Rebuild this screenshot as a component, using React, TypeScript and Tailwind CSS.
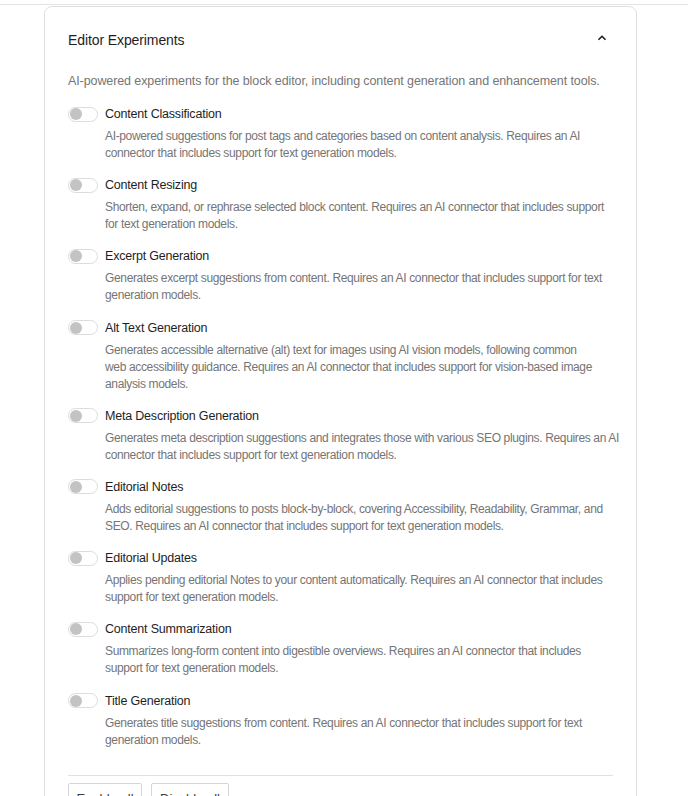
import React from 'react';

type Experiment = {
  label: string;
  lines: string[];
};

const experiments: Experiment[] = [
  {
    label: 'Content Classification',
    lines: [
      'AI-powered suggestions for post tags and categories based on content analysis. Requires an AI',
      'connector that includes support for text generation models.',
    ],
  },
  {
    label: 'Content Resizing',
    lines: [
      'Shorten, expand, or rephrase selected block content. Requires an AI connector that includes support',
      'for text generation models.',
    ],
  },
  {
    label: 'Excerpt Generation',
    lines: [
      'Generates excerpt suggestions from content. Requires an AI connector that includes support for text',
      'generation models.',
    ],
  },
  {
    label: 'Alt Text Generation',
    lines: [
      'Generates accessible alternative (alt) text for images using AI vision models, following common',
      'web accessibility guidance. Requires an AI connector that includes support for vision-based image',
      'analysis models.',
    ],
  },
  {
    label: 'Meta Description Generation',
    lines: [
      'Generates meta description suggestions and integrates those with various SEO plugins. Requires an AI',
      'connector that includes support for text generation models.',
    ],
  },
  {
    label: 'Editorial Notes',
    lines: [
      'Adds editorial suggestions to posts block-by-block, covering Accessibility, Readability, Grammar, and',
      'SEO. Requires an AI connector that includes support for text generation models.',
    ],
  },
  {
    label: 'Editorial Updates',
    lines: [
      'Applies pending editorial Notes to your content automatically. Requires an AI connector that includes',
      'support for text generation models.',
    ],
  },
  {
    label: 'Content Summarization',
    lines: [
      'Summarizes long-form content into digestible overviews. Requires an AI connector that includes',
      'support for text generation models.',
    ],
  },
  {
    label: 'Title Generation',
    lines: [
      'Generates title suggestions from content. Requires an AI connector that includes support for text',
      'generation models.',
    ],
  },
];

// Off-state toggle, as drawn in the settings panel
const Toggle: React.FC = () => (
  <span className="relative inline-block w-[30px] h-[15px] rounded-full border border-[#dcdcdc] bg-white shrink-0">
    <span className="absolute left-[1px] top-[0.5px] w-[12px] h-[12px] rounded-full bg-[#c3c3c3]" />
  </span>
);

export default function App() {
  return (
    <div className="min-h-screen bg-white text-[#1e1e1e] font-['Liberation_Sans',Arial,sans-serif]">
      <div className="h-[5px] border-b border-[#e4e4e4]" />

      <div className="ml-[44px] mt-[1px] w-[593px] rounded-[8px] border border-[#e0e0e0] px-[23px] pt-[23px]">
        {/* Panel header */}
        <div className="flex items-center justify-between h-[20px]">
          <h2 className="text-[14px] leading-[20px] font-normal tracking-[-0.1px]">Editor Experiments</h2>
          <svg className="w-[12px] h-[12px] mr-[5px] -mt-[4px]" viewBox="0 0 12 12" fill="none">
            <path d="M2.5 7.8 L6 4.3 L9.5 7.8" stroke="#1e1e1e" strokeWidth="1.6" />
          </svg>
        </div>

        <p className="mt-[22px] text-[12.5px] leading-[18px] tracking-[-0.1px] text-[#757575] whitespace-nowrap">
          AI-powered experiments for the block editor, including content generation and enhancement tools.
        </p>

        <div className="mt-[15px] flex flex-col gap-[14.2px]">
          {experiments.map((exp) => (
            <div key={exp.label}>
              <div className="flex items-center gap-[7px] h-[18px]">
                <Toggle />
                <span className="text-[12.5px] leading-[18px] tracking-[-0.2px]">{exp.label}</span>
              </div>
              <div className="mt-[5px] pl-[37px] text-[12px] leading-[17px] tracking-[-0.35px] text-[#757575] whitespace-nowrap">
                {exp.lines.map((line, i) => (
                  <div key={i}>{line}</div>
                ))}
              </div>
            </div>
          ))}
        </div>

        <div className="mt-[26px] border-t border-[#e0e0e0]" />

        <div className="flex gap-[9px] pt-[7px] pb-[20px]">
          <button className="w-[74px] h-[33px] rounded-[2px] border border-[#d6d6d6] bg-white text-[13px] text-[#3c3c3c]">
            Enable all
          </button>
          <button className="w-[78px] h-[33px] rounded-[2px] border border-[#d6d6d6] bg-white text-[13px] text-[#3c3c3c]">
            Disable all
          </button>
        </div>
      </div>
    </div>
  );
}
